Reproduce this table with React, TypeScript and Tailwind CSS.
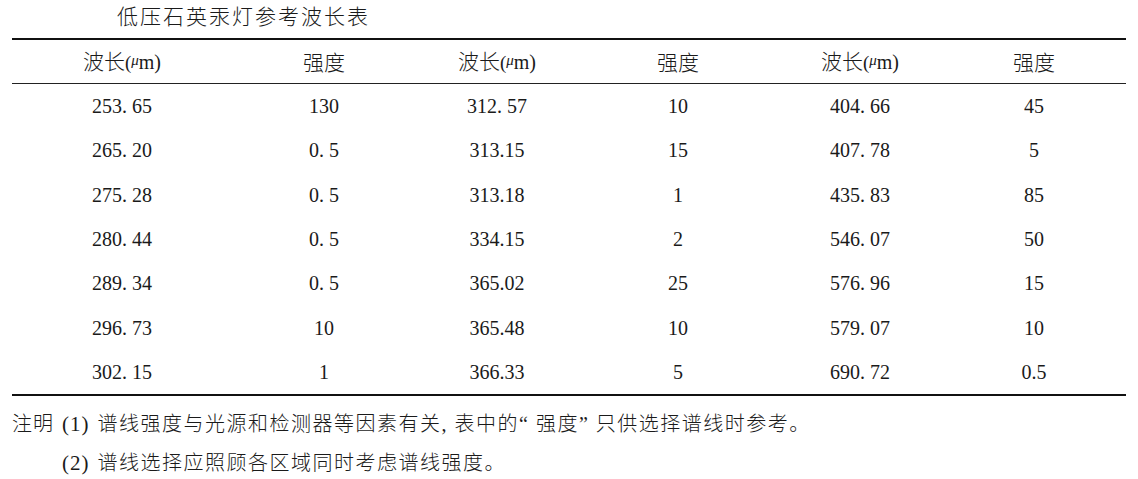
const rows: string[][] = [
  ['253. 65', '130', '312. 57', '10', '404. 66', '45'],
  ['265. 20', '0. 5', '313.15', '15', '407. 78', '5'],
  ['275. 28', '0. 5', '313.18', '1', '435. 83', '85'],
  ['280. 44', '0. 5', '334.15', '2', '546. 07', '50'],
  ['289. 34', '0. 5', '365.02', '25', '576. 96', '15'],
  ['296. 73', '10', '365.48', '10', '579. 07', '10'],
  ['302. 15', '1', '366.33', '5', '690. 72', '0.5'],
];

const cjk = "font-['Noto_Sans_CJK_SC',sans-serif]";
const serif = "font-['Liberation_Serif','Noto_Sans_CJK_SC',serif]";
const cols = 'grid grid-cols-[220px_184px_162px_200px_164px_184px]';

function WaveHead() {
  return (
    <span className="inline-flex items-baseline">
      <span className={`${cjk} font-light text-[21px]`}>波长</span>
      <span className={`${serif} text-[19px]`}>(</span>
      <span className={`${serif} italic text-[15px] -translate-y-[4px]`}>μ</span>
      <span className={`${serif} text-[20px]`}>m)</span>
    </span>
  );
}

function Num({ n }: { n: string }) {
  return (
    <span className={`${serif} text-[21px] tracking-[1px] mr-[8px]`}>({n})</span>
  );
}

export default function App() {
  return (
    <div className="w-[1138px] h-[479px] bg-white text-[#1a1a1a] overflow-hidden">
      <div className={`${cjk} font-light text-[21px] tracking-[2px] h-[38px] pl-[117px] pt-[2px] flex items-start`}>
        <span className="leading-[26px]">低压石英汞灯参考波长表</span>
      </div>

      <div className="mx-[12px] border-t-2 border-b-2 border-[#111]">
        <div className={`${cols} h-[44px] items-center border-b-[1.5px] border-[#222] text-[20px]`}>
          <div className="text-center"><WaveHead /></div>
          <div className={`text-center ${cjk} font-light text-[21px]`}>强度</div>
          <div className="text-center"><WaveHead /></div>
          <div className={`text-center ${cjk} font-light text-[21px]`}>强度</div>
          <div className="text-center"><WaveHead /></div>
          <div className={`text-center ${cjk} font-light text-[21px]`}>强度</div>
        </div>
        <div>
          {rows.map((r, i) => (
            <div key={i} className={`${cols} h-[44.3px] items-center ${serif} text-[20px]`}>
              {r.map((c, j) => (
                <div key={j} className="text-center whitespace-pre">{c}</div>
              ))}
            </div>
          ))}
        </div>
      </div>

      <div className={`${cjk} font-light text-[20px] tracking-[1.5px] leading-[37px] pl-[12px] pt-[8px]`}>
        <div className="flex whitespace-pre">
          <span className="w-[50px] tracking-[1px]">注明</span>
          <span>
            <Num n="1" />谱线强度与光源和检测器等因素有关<span className={serif}>, </span>表中的<span className={serif}>“ </span>强度<span className={serif}>” </span>只供选择谱线时参考。
          </span>
        </div>
        <div className="pl-[50px]"><Num n="2" />谱线选择应照顾各区域同时考虑谱线强度。</div>
      </div>
    </div>
  );
}
